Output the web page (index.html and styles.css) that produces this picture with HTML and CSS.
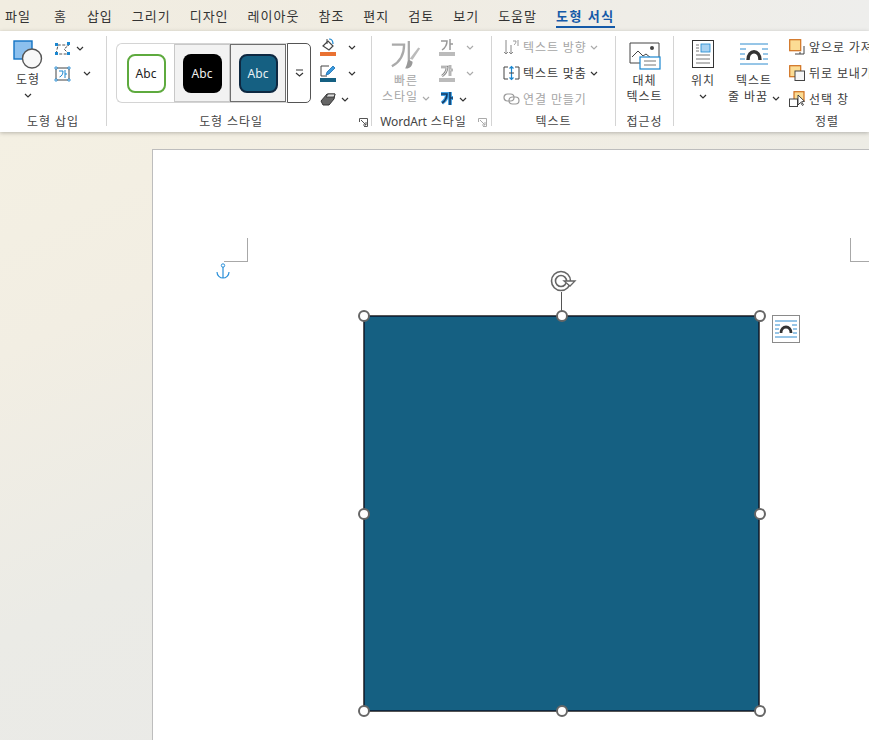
FILE: index.html
```html
<!DOCTYPE html>
<html lang="ko">
<head>
    <meta charset="UTF-8">
    <meta name="viewport" content="width=device-width, initial-scale=1.0">
    <title>도형 서식</title>
    <link rel="stylesheet" href="styles.css">
</head>
<body>
    <svg class="sprites" width="0" height="0">
        <symbol id="chev" viewBox="0 0 8 5"><path d="M1 1l3 3 3-3" fill="none" stroke="currentColor" stroke-width="1.2"/></symbol>
        <symbol id="launch" viewBox="0 0 9 9"><path d="M.5 4V.5H8.500V8.500H5M2 2l5 5M7 4v3H4" fill="none" stroke="currentColor"/></symbol>
    </svg>

    <div class="tabs">
        <span class="tab tab-file">파일</span>
        <span class="tab tab-home">홈</span>
        <span class="tab">삽입</span>
        <span class="tab">그리기</span>
        <span class="tab">디자인</span>
        <span class="tab">레이아웃</span>
        <span class="tab">참조</span>
        <span class="tab">편지</span>
        <span class="tab">검토</span>
        <span class="tab">보기</span>
        <span class="tab">도움말</span>
        <span class="tab tab-active">도형 서식</span>
    </div>

    <div class="ribbon">
        <!-- 도형 삽입 -->
        <div class="group group-insert">
            <div class="group-body">
                <div class="big-btn insert-btn">
                    <svg class="big-icon" width="30" height="30" viewBox="0 0 30 30">
                        <rect x="1" y="1" width="18" height="18" fill="#8cc0ee" stroke="#1273c4" stroke-width="1.400"/>
                        <circle cx="19" cy="18.500" r="9.500" fill="#f8f8f8" stroke="#555" stroke-width="1.400"/>
                    </svg>
                    <span class="big-label">도형</span>
                    <svg class="chev chev-below"><use href="#chev"/></svg>
                </div>
                <div class="small-col insert-col">
                    <div class="insert-row">
                        <svg width="18" height="16" viewBox="0 0 18 16">
                            <path d="M2 13l2-9h11l-5 4 5 5z" fill="none" stroke="#555" stroke-dasharray="3 1.500"/>
                            <path d="M1 2h3v3H1zM13 1h3v3h-3zM1 11h3v3H1zM13 11h3v3h-3z" fill="#1b87d0"/>
                        </svg>
                        <svg class="chev"><use href="#chev"/></svg>
                    </div>
                    <div class="insert-row insert-row-2">
                        <svg width="18" height="16" viewBox="0 0 18 16">
                            <rect x="2" y="2" width="13" height="12" fill="#fff" stroke="#444"/>
                            <path d="M5 5h4c0 3-1 5-3.500 6M11 4v8M11 8h2" fill="none" stroke="#1b87d0"/>
                            <path d="M1 1h2v2H1zM14 1h2v2h-2zM1 13h2v2H1zM14 13h2v2h-2z" fill="#fff" stroke="#1b87d0" stroke-width=".8"/>
                        </svg>
                        <svg class="chev"><use href="#chev"/></svg>
                    </div>
                </div>
            </div>
            <div class="group-label">도형 삽입</div>
        </div>
        <div class="sep"></div>

        <!-- 도형 스타일 -->
        <div class="group group-styles">
            <div class="group-body">
                <div class="gallery">
                    <div class="gallery-item"><div class="swatch swatch-green">Abc</div></div>
                    <div class="gallery-item gallery-item-hover"><div class="swatch swatch-black">Abc</div></div>
                    <div class="gallery-item gallery-item-on"><div class="swatch swatch-teal">Abc</div></div>
                </div>
                <div class="gallery-more">
                    <svg width="9" height="8" viewBox="0 0 9 8"><path d="M1 1h7M1 4l3.500 3L8 4" fill="none" stroke="#333" stroke-width="1.200"/></svg>
                </div>
                <div class="small-col style-col">
                    <div class="small-row">
                        <svg width="17" height="18" viewBox="0 0 17 18">
                            <path d="M3 8l5-5 5 5-4 4z" fill="#fff" stroke="#444" stroke-width="1.200"/>
                            <path d="M7 1v5" stroke="#444"/>
                            <path d="M9 1c3 0 4 2 4 5" fill="none" stroke="#1b87d0" stroke-width="1.200"/>
                            <rect y="14" width="16" height="4" fill="#e97132"/>
                        </svg>
                        <svg class="chev chev-style"><use href="#chev"/></svg>
                    </div>
                    <div class="small-row">
                        <svg width="17" height="18" viewBox="0 0 17 18">
                            <path d="M9 2H1v10h6" fill="none" stroke="#444"/>
                            <path d="M6 11l1-3 6-6 2 2-6 6z" fill="#3a9ade" stroke="#1b6fb0" stroke-width=".8"/>
                            <rect y="14" width="16" height="4" fill="#156082"/>
                        </svg>
                        <svg class="chev chev-style"><use href="#chev"/></svg>
                    </div>
                    <div class="small-row">
                        <svg width="17" height="14" viewBox="0 0 17 14">
                            <path d="M1 9l6-7h8l-1 5-5 6H3z" fill="#666" stroke="#333"/>
                            <path d="M6 5h8l1-3H8z" fill="#ddd" stroke="#333" stroke-width=".8"/>
                        </svg>
                        <svg class="chev"><use href="#chev"/></svg>
                    </div>
                </div>
            </div>
            <div class="group-label label-styles">
                <span>도형 스타일</span>
                <svg class="launch launch-styles"><use href="#launch"/></svg>
            </div>
        </div>
        <div class="sep"></div>

        <!-- WordArt 스타일 -->
        <div class="group group-wordart">
            <div class="group-body">
                <div class="big-btn quick-btn is-off">
                    <svg class="big-icon" width="32" height="32" viewBox="0 0 34 34">
                        <path d="M2 5h13c0 10-4 18-13 23M20 1v24M20 12h-1" fill="none" stroke="#aaa" stroke-width="2.400"/>
                        <path d="M32 9l-8 12-3-1 9-12z" fill="#bbb"/>
                        <path d="M20 21l4 2c0 5-4 8-8 7 2-2 2-7 4-9z" fill="#999"/>
                    </svg>
                    <span class="big-label">빠른</span>
                    <span class="big-label">스타일 <svg class="chev"><use href="#chev"/></svg></span>
                </div>
                <div class="small-col wordart-col">
                    <div class="small-row is-off">
                        <svg width="16" height="18" viewBox="0 0 16 18">
                            <path d="M2 3h6c0 4-2 7-5 9M11 1v11M11 6h3" fill="none" stroke="#999" stroke-width="1.500"/>
                            <rect y="14" width="16" height="4" fill="#bbb"/>
                        </svg>
                        <svg class="chev chev-art"><use href="#chev"/></svg>
                    </div>
                    <div class="small-row is-off">
                        <svg width="16" height="18" viewBox="0 0 16 18">
                            <path d="M2 3h6c0 4-2 7-5 9M11 1v11M11 6h3" fill="none" stroke="#888" stroke-width="2.600"/>
                            <path d="M2 3h6c0 4-2 7-5 9M11 1v11M11 6h3" fill="none" stroke="#eee" stroke-width=".9"/>
                            <rect y="14" width="16" height="4" fill="#bbb"/>
                        </svg>
                        <svg class="chev chev-art"><use href="#chev"/></svg>
                    </div>
                    <div class="small-row">
                        <svg width="16" height="16" viewBox="0 0 16 16">
                            <path d="M2 3h6c0 4-2 7-5 9M11 1v13M11 7h3" fill="none" stroke="#3f9fe2" stroke-width="3.800"/>
                            <path d="M2 3h6c0 4-2 7-5 9M11 1v13M11 7h3" fill="none" stroke="#123a66" stroke-width="1.600"/>
                        </svg>
                        <svg class="chev"><use href="#chev"/></svg>
                    </div>
                </div>
            </div>
            <div class="group-label label-wordart">
                <span><span class="latin">WordArt</span> 스타일</span>
                <svg class="launch launch-art"><use href="#launch"/></svg>
            </div>
        </div>
        <div class="sep"></div>

        <!-- 텍스트 -->
        <div class="group group-text">
            <div class="group-body">
                <div class="small-col text-col">
                    <div class="small-row is-off">
                        <svg width="17" height="17" viewBox="0 0 17 17">
                            <path d="M3 1v14M1 13l2 2 2-2M8 6v9M6 13l2 2 2-2" fill="none" stroke="#888"/>
                            <path d="M10 2h3c0 2-1 3-2 4M15 1v6" fill="none" stroke="#999"/>
                        </svg>
                        <span class="row-text">텍스트 방향</span>
                        <svg class="chev"><use href="#chev"/></svg>
                    </div>
                    <div class="small-row">
                        <svg width="17" height="17" viewBox="0 0 17 17">
                            <path d="M5 2H1v12h4M12 2h4v12h-4" fill="none" stroke="#444"/>
                            <path d="M8.500 1v14M6.500 3.500l2-2 2 2M6.500 12.500l2 2 2-2" fill="none" stroke="#1b87d0" stroke-width="1.200"/>
                            <path d="M6 8h5" stroke="#444"/>
                        </svg>
                        <span class="row-text">텍스트 맞춤</span>
                        <svg class="chev"><use href="#chev"/></svg>
                    </div>
                    <div class="small-row is-off">
                        <svg width="17" height="12" viewBox="0 0 17 12">
                            <rect x="1" y="1" width="10" height="7" rx="3.500" fill="none" stroke="#999" stroke-width="1.200"/>
                            <rect x="6" y="4" width="10" height="7" rx="3.500" fill="none" stroke="#999" stroke-width="1.200"/>
                        </svg>
                        <span class="row-text">연결 만들기</span>
                    </div>
                </div>
            </div>
            <div class="group-label">텍스트</div>
        </div>
        <div class="sep"></div>

        <!-- 접근성 -->
        <div class="group group-access">
            <div class="group-body">
                <div class="big-btn alt-btn">
                    <svg class="big-icon" width="32" height="28" viewBox="0 0 32 28">
                        <path d="M30 17V1H1v20h10" fill="#fff" stroke="#444"/>
                        <path d="M3 15l6-6 5 5 3-2 5 4" fill="none" stroke="#444"/>
                        <circle cx="23" cy="6" r="2" fill="#444"/>
                        <rect x="11" y="15" width="20" height="12" fill="#fff" stroke="#1b87d0" stroke-width="1.200"/>
                        <path d="M15 19h12M15 23h12" stroke="#777"/>
                    </svg>
                    <span class="big-label">대체</span>
                    <span class="big-label">텍스트</span>
                </div>
            </div>
            <div class="group-label">접근성</div>
        </div>
        <div class="sep"></div>

        <!-- 정렬 -->
        <div class="group group-arrange">
            <div class="group-body">
                <div class="big-btn pos-btn">
                    <svg class="big-icon" width="22" height="28" viewBox="0 0 22 28">
                        <rect x=".5" y=".5" width="21" height="27" fill="#fff" stroke="#333"/>
                        <rect x="9" y="4" width="9" height="8" fill="#a8d2f2" stroke="#1b87d0" stroke-width=".8"/>
                        <path d="M4 5h3M4 8h3M4 11h3M4 15h14M4 19h14M4 23h14" stroke="#777"/>
                    </svg>
                    <span class="big-label">위치</span>
                    <svg class="chev chev-below"><use href="#chev"/></svg>
                </div>
                <div class="big-btn wrap-btn">
                    <svg class="big-icon" width="30" height="22" viewBox="0 0 30 22">
                        <path d="M1 1h28M1 6h6M23 6h6M1 11h5M24 11h5M1 16h5M24 16h5M1 21h28" stroke="#2f8ccf"/>
                        <path d="M9 17c0-11 12-11 12 0" fill="none" stroke="#333" stroke-width="3.400"/>
                    </svg>
                    <span class="big-label">텍스트</span>
                    <span class="big-label">줄 바꿈 <svg class="chev"><use href="#chev"/></svg></span>
                </div>
                <div class="small-col arrange-col">
                    <div class="small-row">
                        <svg width="16" height="16" viewBox="0 0 16 16">
                            <path d="M11 13v2H6M15 7v8h-4" fill="none" stroke="#444"/>
                            <rect x=".7" y=".7" width="11" height="11" fill="#fbdc94" stroke="#d0701e" stroke-width="1.200"/>
                        </svg>
                        <span class="row-text">앞으로 가져오기</span>
                    </div>
                    <div class="small-row">
                        <svg width="16" height="16" viewBox="0 0 16 16">
                            <rect x=".7" y=".7" width="11" height="11" fill="#fbdc94" stroke="#d0701e" stroke-width="1.200"/>
                            <rect x="6" y="6" width="9.500" height="9.500" fill="#f6f6f6" stroke="#444"/>
                        </svg>
                        <span class="row-text">뒤로 보내기</span>
                    </div>
                    <div class="small-row">
                        <svg width="16" height="16" viewBox="0 0 16 16">
                            <rect x="5" y=".7" width="10" height="9" fill="#fbdc94" stroke="#d0701e" stroke-width="1.200"/>
                            <rect x=".5" y="8" width="8" height="7.500" fill="#fff" stroke="#444"/>
                            <path d="M9 4v10l2.500-2.500 2 3 1-.7-2-3 3-.5z" fill="#fff" stroke="#333" stroke-width=".9"/>
                        </svg>
                        <span class="row-text">선택 창</span>
                    </div>
                </div>
            </div>
            <div class="group-label label-arrange">정렬</div>
        </div>
    </div>

    <div class="workspace">
        <div class="page">
            <div class="crop crop-left"></div>
            <div class="crop crop-right"></div>

            <svg class="anchor" width="14" height="16" viewBox="0 0 14 16">
                <circle cx="7" cy="2.500" r="1.700" fill="none" stroke="#2b90d9"/>
                <path d="M7 4v11M1 9c0 3.500 3 6 6 6s6-2.500 6-6" fill="none" stroke="#2b90d9" stroke-width="1.200"/>
            </svg>

            <div class="shape">
                <svg class="rotate" width="28" height="24" viewBox="0 0 28 24">
                    <circle cx="11" cy="11" r="9.500" fill="none" stroke="#666" stroke-width="1.600"/>
                    <circle cx="11" cy="11" r="5.500" fill="none" stroke="#666" stroke-width="1.600"/>
                    <path d="M14 11h11l-5 5z" fill="#fff" stroke="#666" stroke-width="1.300"/>
                </svg>
                <div class="rotate-line"></div>
                <span class="handle h-tl"></span>
                <span class="handle h-tc"></span>
                <span class="handle h-tr"></span>
                <span class="handle h-ml"></span>
                <span class="handle h-mr"></span>
                <span class="handle h-bl"></span>
                <span class="handle h-bc"></span>
                <span class="handle h-br"></span>
            </div>

            <div class="layout-btn">
                <svg width="26" height="26" viewBox="0 0 26 26">
                    <path d="M2 5h22M2 9h5M19 9h5M2 13h4M20 13h4M2 17h4M20 17h4M2 21h22" stroke="#2f8ccf"/>
                    <path d="M8 17c0-8 10-8 10 0" fill="none" stroke="#333" stroke-width="2.800"/>
                </svg>
            </div>
        </div>
    </div>
</body>
</html>
```

FILE: styles.css
```css
* {
    box-sizing: border-box;
}

html, body {
    height: 100%;
}

body {
    margin: 0;
    overflow: hidden;
    font-family: "Noto Sans", "Noto Sans CJK KR", sans-serif;
    font-size: 12px;
    color: #3c3c3c;
    background: #eee;
    display: flex;
    flex-direction: column;
}

.sprites {
    position: absolute;
}

/* tabs */
.tabs {
    display: flex;
    height: 31px;
    flex-shrink: 0;
    padding-left: 5px;
    background: linear-gradient(90deg, #f1ede1 0%, #f0ece2 45%, #eeeeec 100%);
}

.tab {
    position: relative;
    font-size: 13px;
    letter-spacing: 1px;
    line-height: 32px;
    margin-right: 19px;
    color: #333;
    white-space: nowrap;
}

.tab-file {
    margin-right: 23px;
}

.tab-home {
    margin-right: 20px;
}

.tab-active {
    color: #155aa8;
    font-weight: 700;
    letter-spacing: 1.5px;
}

.tab-active::after {
    content: "";
    position: absolute;
    left: 0;
    right: 0;
    bottom: 3px;
    height: 2px;
    background: #155aa8;
}

/* ribbon */
.ribbon {
    display: flex;
    height: 101px;
    flex-shrink: 0;
    background: #fff;
    box-shadow: 0 1px 4px rgba(0, 0, 0, 0.25);
    position: relative;
    z-index: 1;
    white-space: nowrap;
    letter-spacing: 0.9px;
}

.sep {
    width: 1px;
    height: 90px;
    margin-top: 5px;
    background: #d4d4d4;
    flex-shrink: 0;
}

.group {
    display: flex;
    flex-direction: column;
    flex-shrink: 0;
    padding-top: 3px;
}

.group-insert { width: 106px; }
.group-styles { width: 264px; }
.group-wordart { width: 119px; }
.group-text { width: 123px; }
.group-access { width: 57px; }
.group-arrange { width: 195px; }

.group-body {
    display: flex;
    height: 80px;
}

.group-label {
    position: relative;
    text-align: center;
    line-height: 16px;
    color: #444;
}

.launch {
    position: absolute;
    width: 9px;
    height: 9px;
    top: 4px;
    color: #555;
}

.launch-styles { left: 252px; }
.launch-art { left: 106px; color: #aaa; }

.label-styles span { position: relative; left: -8px; }
.label-wordart > span { position: relative; left: -8px; }
.label-arrange { padding-left: 111px; }

.latin {
    letter-spacing: -0.1px;
}

.chev {
    width: 8px;
    height: 5px;
    color: #333;
    flex-shrink: 0;
}

.big-btn {
    display: flex;
    flex-direction: column;
    align-items: center;
    flex-shrink: 0;
    padding-top: 6px;
}

.big-icon {
    height: 30px;
    margin-bottom: 2px;
}

.big-label {
    line-height: 16px;
    color: #3c3c3c;
}

.chev-below {
    margin-top: 5px;
}

.small-col {
    display: flex;
    flex-direction: column;
}

.small-row {
    display: flex;
    align-items: center;
    height: 26px;
}

.row-text {
    margin: 0 3px 0 3px;
}

.is-off .big-label,
.is-off .row-text {
    color: #a6a6a6;
}

.is-off .chev {
    color: #aaa;
}

/* 도형 삽입 */
.insert-btn {
    width: 44px;
    margin-left: 6px;
}

.insert-col {
    margin-left: 4px;
    padding-top: 5px;
}

.insert-row {
    display: flex;
    align-items: center;
    gap: 4px;
    height: 19px;
}

.insert-row-2 {
    margin-top: 6px;
    gap: 11px;
}

/* 도형 스타일 */
.gallery {
    display: flex;
    width: 171px;
    height: 60px;
    margin: 9px 0 0 9px;
    padding-left: 1px;
    border: 1px solid #d4d4d4;
    border-right: none;
    border-radius: 6px 0 0 6px;
    letter-spacing: 0;
}

.gallery-item {
    width: 56px;
    display: flex;
    align-items: center;
    justify-content: center;
    border: 1px solid transparent;
}

.gallery-item-hover {
    border-color: #c8c8c8;
    background: #f2f2f2;
}

.gallery-item-on {
    border-color: #6e6e6e;
    background: #f2f2f2;
}

.swatch {
    width: 39px;
    height: 39px;
    border-radius: 8px;
    display: flex;
    align-items: center;
    justify-content: center;
    font-size: 12px;
}

.swatch-green {
    background: #fff;
    color: #222;
    border: 2px solid #5eaa3e;
}

.swatch-black {
    background: #000;
    color: #f0f0f0;
}

.swatch-teal {
    background: #156082;
    color: #e8f0f4;
    border: 2px solid #0e2841;
}

.gallery-more {
    width: 24px;
    height: 60px;
    margin-top: 9px;
    display: flex;
    align-items: center;
    justify-content: center;
    border: 1px solid #555;
    border-radius: 0 5px 5px 0;
}

.style-col {
    margin-left: 9px;
}

.chev-style {
    margin-left: 7px;
}

.style-col .small-row {
    gap: 4px;
}

/* WordArt 스타일 */
.quick-btn {
    width: 54px;
    margin-left: 7px;
}

.quick-btn .big-icon {
    height: 32px;
    margin-bottom: 1px;
}

.wordart-col {
    margin-left: 6px;
}

.wordart-col .small-row {
    gap: 4px;
}

.chev-art {
    margin-left: 7px;
}

/* 텍스트 */
.text-col {
    margin-left: 11px;
}

/* 접근성 */
.alt-btn {
    width: 57px;
    padding-top: 8px;
}

.alt-btn .big-icon {
    height: 28px;
    margin-bottom: 3px;
}

/* 정렬 */
.pos-btn {
    width: 40px;
    margin-left: 9px;
}

.pos-btn .big-icon {
    height: 28px;
    margin-bottom: 5px;
}

.wrap-btn {
    width: 60px;
    margin-left: 1px;
    padding-top: 9px;
}

.wrap-btn .big-icon {
    height: 22px;
    margin-bottom: 8px;
}

.arrange-col {
    margin-left: 5px;
}

.arrange-col .row-text {
    margin-left: 4px;
}

/* document */
.workspace {
    flex: 1;
    padding: 17px 0 0 152px;
    background: linear-gradient(155deg, #f4f0e3 0%, #f2eee3 22%, #ebebe6 50%, #e9e9e9 100%);
    overflow: hidden;
    min-height: 0;
}

.page {
    position: relative;
    height: 621px;
    background: #fff;
    border: 1px solid #bdbdbd;
    border-right: none;
}

.crop {
    position: absolute;
    top: 88px;
    height: 24px;
    border-bottom: 1px solid #a8a8a8;
}

.crop-left {
    left: 71px;
    width: 24px;
    border-right: 1px solid #a8a8a8;
}

.crop-right {
    left: 697px;
    width: 20px;
    border-left: 1px solid #a8a8a8;
}

.anchor {
    position: absolute;
    left: 63px;
    top: 113px;
}

.shape {
    position: absolute;
    left: 210px;
    top: 165px;
    width: 397px;
    height: 397px;
    background: #156082;
    border: 2px solid #0e2841;
    outline: 1px solid #555;
    outline-offset: -1px;
}

.rotate {
    position: absolute;
    left: 185px;
    top: -47px;
}

.rotate-line {
    position: absolute;
    left: 196px;
    top: -25px;
    width: 1px;
    height: 23px;
    background: #555;
}

.handle {
    position: absolute;
    width: 12px;
    height: 12px;
    border-radius: 50%;
    background: #fff;
    border: 2px solid #666;
}

.h-tl { left: -7.5px; top: -7.5px; }
.h-tc { left: 190.5px; top: -7.5px; }
.h-tr { left: 388.5px; top: -7.5px; }
.h-ml { left: -7.5px; top: 190.5px; }
.h-mr { left: 388.5px; top: 190.5px; }
.h-bl { left: -7.5px; top: 388px; }
.h-bc { left: 190.5px; top: 388px; }
.h-br { left: 388.5px; top: 388px; }

.layout-btn {
    position: absolute;
    left: 619px;
    top: 165px;
    width: 28px;
    height: 28px;
    display: flex;
    background: #fff;
    border: 1px solid #8a8a8a;
}
```
